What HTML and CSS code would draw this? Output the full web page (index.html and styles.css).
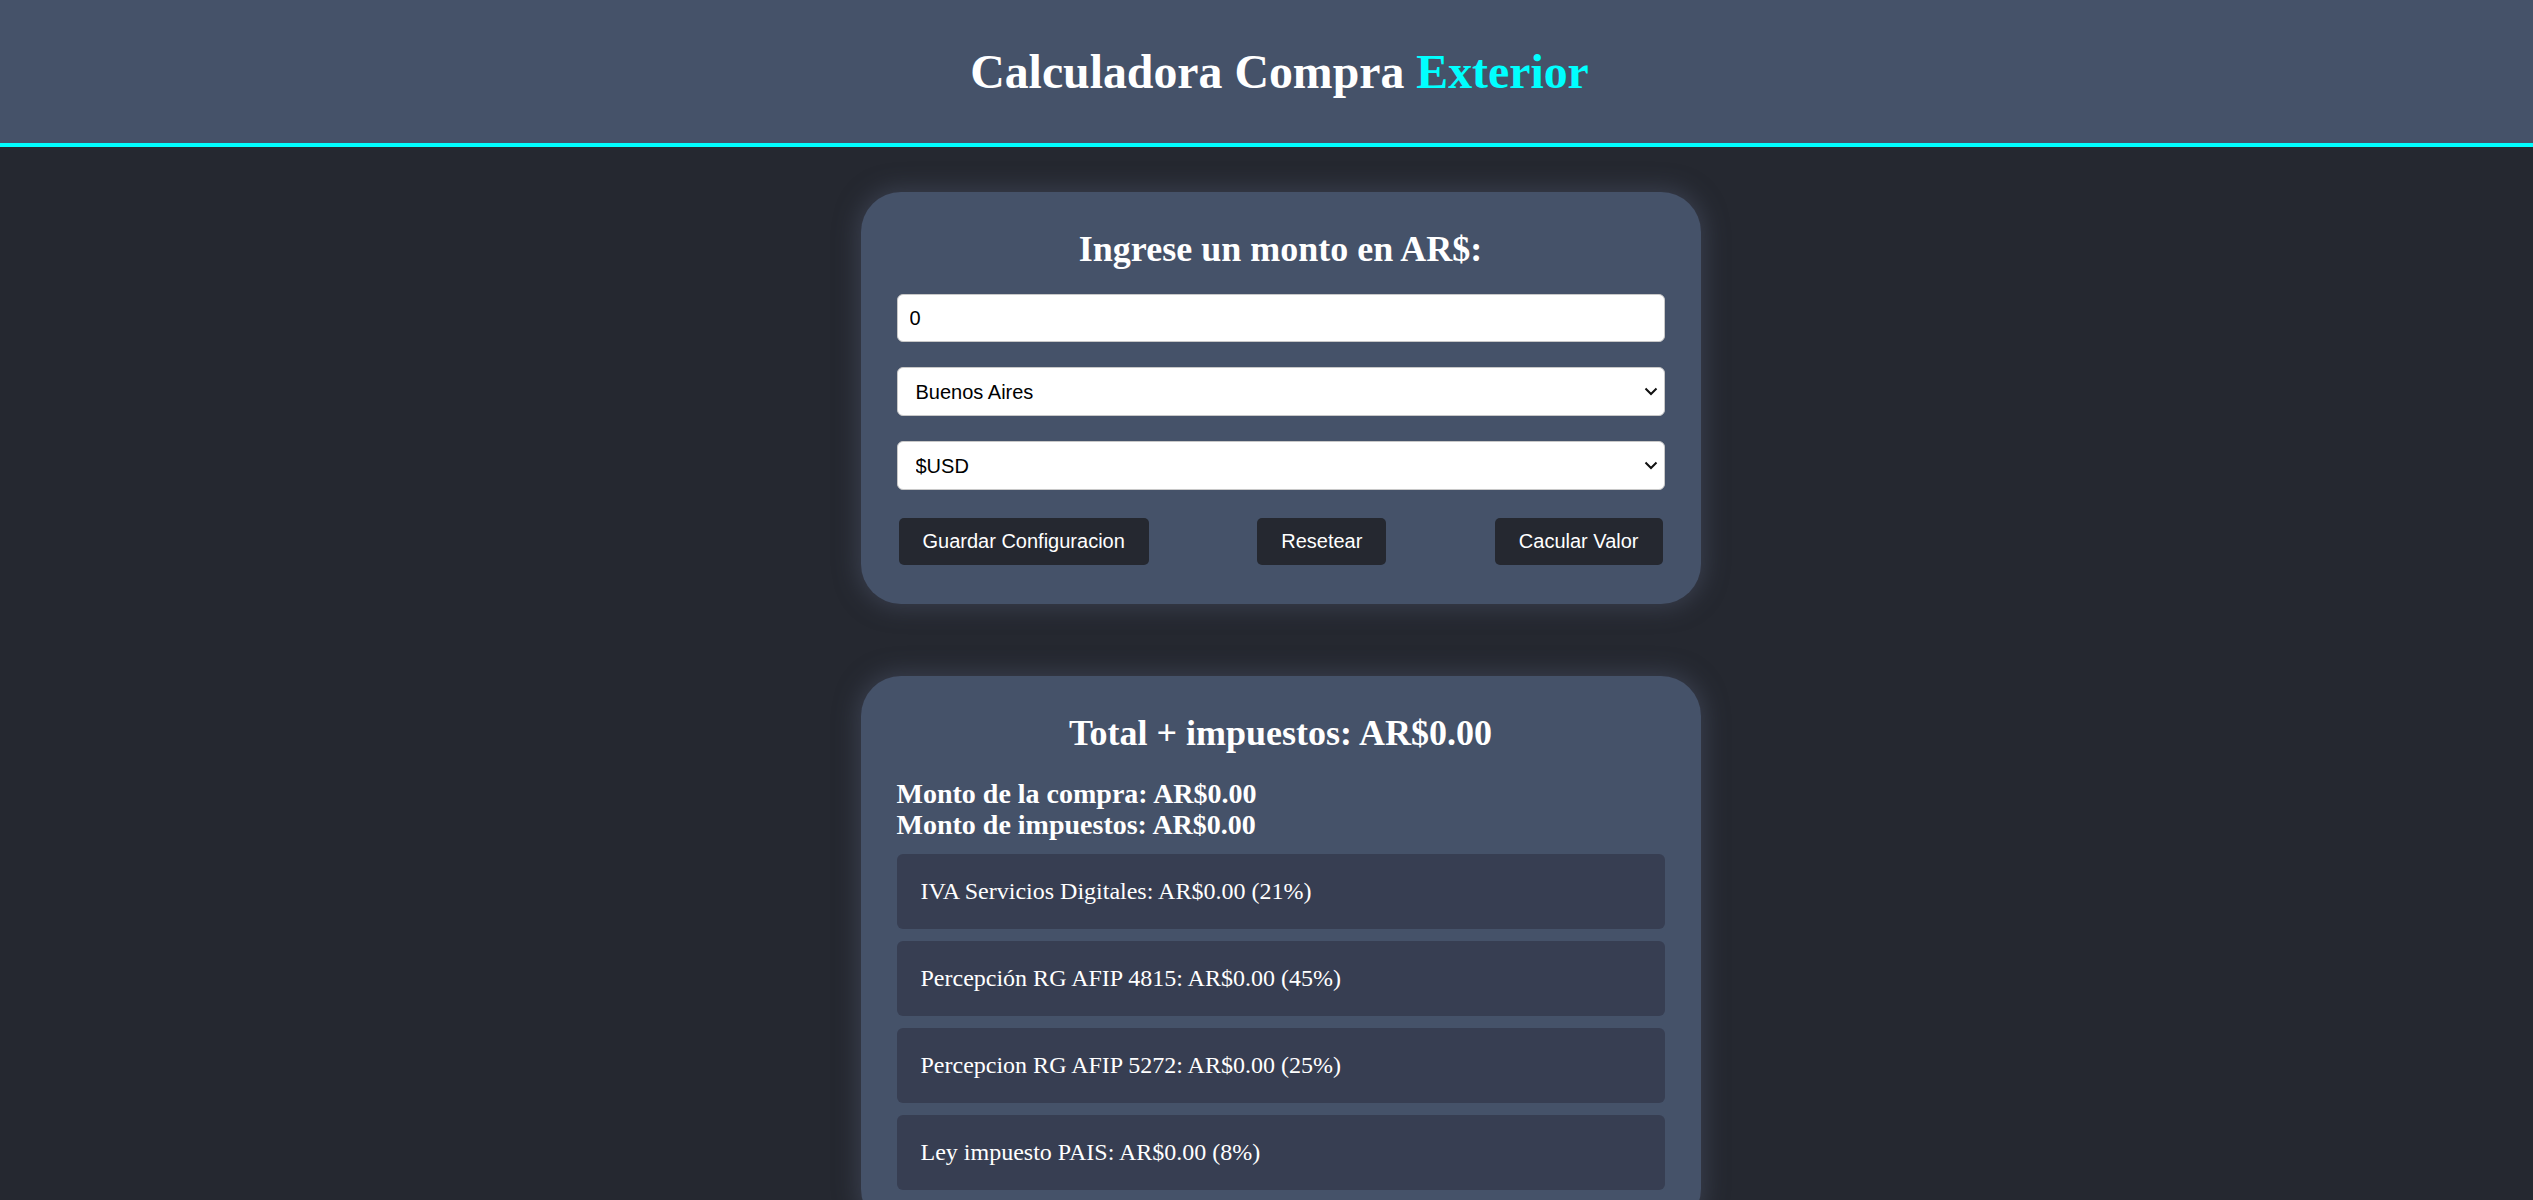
FILE: index.html
```html
<!DOCTYPE html>
<html lang="es">
<head>
<meta charset="utf-8">
<title>Calculadora Compra Exterior</title>
<link rel="stylesheet" href="styles.css">
</head>
<body>
<header class="site-header">
  <h1 class="site-title">Calculadora Compra <span class="accent">Exterior</span></h1>
</header>
<main class="main">
  <section class="card">
    <h2 class="card-title">Ingrese un monto en AR$:</h2>
    <input class="field field-input" type="text" value="0">
    <div class="select-wrap">
      <select class="field field-select">
        <option>Buenos Aires</option>
      </select>
      <svg class="chevron" width="14" height="9" viewBox="0 0 14 9" aria-hidden="true"><path d="M1.5 1.5 L7 7 L12.5 1.5" fill="none" stroke="#111" stroke-width="2"/></svg>
    </div>
    <div class="select-wrap select-wrap-last">
      <select class="field field-select">
        <option>$USD</option>
      </select>
      <svg class="chevron" width="14" height="9" viewBox="0 0 14 9" aria-hidden="true"><path d="M1.5 1.5 L7 7 L12.5 1.5" fill="none" stroke="#111" stroke-width="2"/></svg>
    </div>
    <div class="actions">
      <button class="btn" type="button">Guardar Configuracion</button>
      <button class="btn" type="button">Resetear</button>
      <button class="btn" type="button">Cacular Valor</button>
    </div>
  </section>
  <section class="card card-results">
    <h2 class="card-title">Total + impuestos: AR$0.00</h2>
    <div class="summary">
      <div class="summary-line">Monto de la compra: AR$0.00</div>
      <div class="summary-line">Monto de impuestos: AR$0.00</div>
    </div>
    <ul class="tax-list">
      <li class="tax-item">IVA Servicios Digitales: AR$0.00 (21%)</li>
      <li class="tax-item">Percepción RG AFIP 4815: AR$0.00 (45%)</li>
      <li class="tax-item">Percepcion RG AFIP 5272: AR$0.00 (25%)</li>
      <li class="tax-item">Ley impuesto PAIS: AR$0.00 (8%)</li>
    </ul>
  </section>
</main>
</body>
</html>
```
FILE: styles.css
```css
html, body {
  margin: 0;
  padding: 0;
}
body {
  background: #252830;
  font-family: "Liberation Serif", "Times New Roman", serif;
  color: #ffffff;
}
.site-header {
  background: #455269;
  height: 143px;
  border-bottom: 4px solid #00ffff;
  display: flex;
  align-items: center;
  justify-content: center;
  padding-left: 26px;
}
.site-title {
  margin: 0;
  font-size: 47.8px;
  line-height: 54px;
  font-weight: bold;
  color: #ffffff;
}
.accent {
  color: #00ffff;
}
.main {
  display: flex;
  flex-direction: column;
  align-items: center;
  padding: 45px 0 40px 28px;
  gap: 72px;
}
.card {
  box-sizing: border-box;
  width: 840px;
  background: #455269;
  border-radius: 40px;
  padding: 37px 36px 39px;
  box-shadow: 0 0 22px 4px rgba(72, 80, 100, 0.55);
  display: flex;
  flex-direction: column;
}
.card-title {
  margin: 0 0 25px;
  font-size: 36px;
  line-height: 40px;
  font-weight: bold;
  text-align: center;
}
.field {
  box-sizing: border-box;
  width: 100%;
  margin: 0;
  background: #ffffff;
  border: 1px solid #c8c8c8;
  border-radius: 6px;
  font-family: "Liberation Sans", Arial, sans-serif;
  font-size: 20px;
  color: #000000;
}
.field-input {
  height: 48px;
  padding: 0 12px;
  margin-bottom: 25px;
}
.select-wrap {
  position: relative;
  margin-bottom: 25px;
}
.select-wrap-last {
  margin-bottom: 28px;
}
.field-select {
  display: block;
  height: 49px;
  padding: 0 36px 0 18px;
  -webkit-appearance: none;
  appearance: none;
}
.chevron {
  position: absolute;
  right: 7px;
  top: 20px;
  pointer-events: none;
}
.actions {
  display: flex;
  justify-content: space-between;
  padding: 0 2px;
}
.btn {
  height: 47px;
  padding: 0 24px;
  border: none;
  border-radius: 5px;
  background: #252830;
  color: #ffffff;
  font-family: "Liberation Sans", Arial, sans-serif;
  font-size: 20px;
}
.summary {
  margin: 0 0 14px;
  font-size: 28px;
  line-height: 31px;
  font-weight: bold;
}
.tax-list {
  list-style: none;
  margin: 0;
  padding: 0;
  display: flex;
  flex-direction: column;
  gap: 12px;
}
.tax-item {
  box-sizing: border-box;
  height: 75px;
  display: flex;
  align-items: center;
  padding: 0 24px;
  background: #373e52;
  border-radius: 6px;
  font-size: 24px;
}
```
